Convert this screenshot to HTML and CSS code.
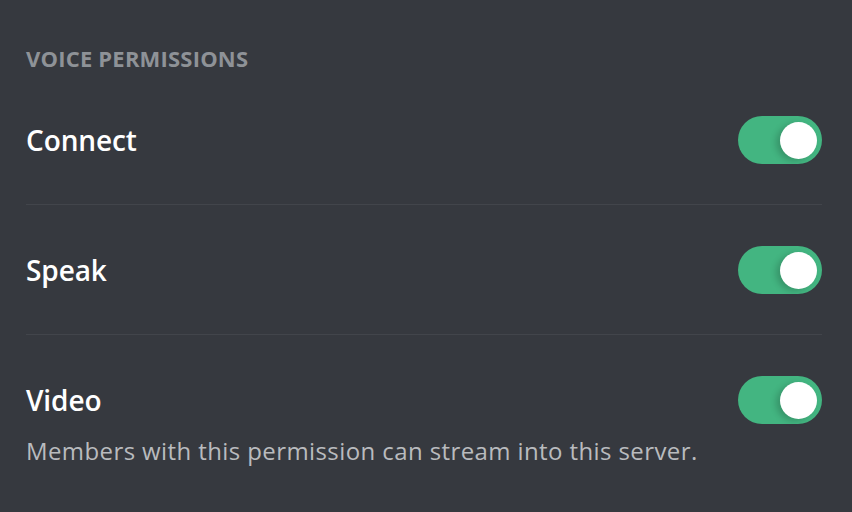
FILE: index.html
```html
<!DOCTYPE html>
<html>
<head>
<meta charset="utf-8">
<link rel="stylesheet" href="styles.css">
</head>
<body>
<div class="panel">
  <h2 class="header">VOICE PERMISSIONS</h2>
  <div class="item">
    <div class="row">
      <span class="title">Connect</span>
      <div class="toggle on"><span class="knob"></span></div>
    </div>
  </div>
  <div class="item">
    <div class="row">
      <span class="title">Speak</span>
      <div class="toggle on"><span class="knob"></span></div>
    </div>
  </div>
  <div class="item last">
    <div class="row">
      <span class="title">Video</span>
      <div class="toggle on"><span class="knob"></span></div>
    </div>
    <p class="desc">Members with this permission can stream into this server.</p>
  </div>
</div>
</body>
</html>
```

FILE: styles.css
```css
html, body {
  margin: 0;
  padding: 0;
  background: #36393f;
  height: 100%;
}
body {
  font-family: "Open Sans", "Noto Sans", sans-serif;
  overflow: hidden;
}
.panel {
  padding: 43px 30px 0 26px;
}
.header {
  margin: 0;
  font-size: 22px;
  line-height: 30px;
  font-weight: 700;
  color: #8e9297;
  letter-spacing: 0.2px;
}
.item {
  padding: 41px 0 40px;
  border-bottom: 1px solid #42454b;
}
.item:first-of-type {
  padding-top: 43px;
}
.item.last {
  border-bottom: none;
  padding-bottom: 0;
}
.row {
  display: flex;
  align-items: center;
  justify-content: space-between;
  height: 48px;
}
.title {
  font-size: 28px;
  font-weight: 600;
  color: #ffffff;
  letter-spacing: -0.1px;
}
.toggle {
  width: 84px;
  height: 48px;
  border-radius: 24px;
  background: #43b581;
  display: flex;
  align-items: center;
  justify-content: flex-end;
  padding: 0 5px;
  box-sizing: border-box;
}
.knob {
  width: 37px;
  height: 37px;
  border-radius: 50%;
  background: #ffffff;
  box-shadow: -4px 2px 6px rgba(0, 0, 0, 0.18);
}
.desc {
  margin: 11px 0 0;
  font-size: 24px;
  line-height: 32px;
  color: #b9bbbe;
  letter-spacing: 0.4px;
}
```
